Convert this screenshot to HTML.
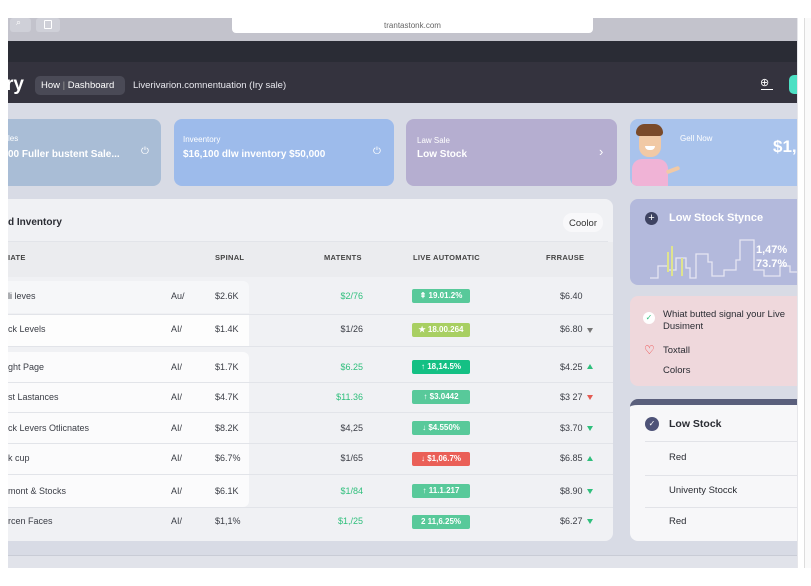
<!DOCTYPE html>
<html><head><meta charset="utf-8"><style>
*{margin:0;padding:0;box-sizing:border-box}
body{width:811px;height:586px;background:#fff;font-family:"Liberation Sans",sans-serif;position:relative;overflow:hidden}
.a{position:absolute}
.t{position:absolute;white-space:nowrap}
.card{position:absolute;border-radius:8px;color:#fff}
.row{position:absolute;left:8px;width:605px;height:1px;background:#e2e4e9}
.c{font-size:9px;color:#3a3d45}
.m{left:320px;width:43px;text-align:right}
.badge{position:absolute;left:412px;width:58px;height:14px;border-radius:2px;color:#fff;font-size:8px;font-weight:bold;text-align:center;line-height:14px}
.g{color:#2fbf7c}
.up{position:absolute;left:587px;width:0;height:0;border-left:3px solid transparent;border-right:3px solid transparent;border-bottom:5px solid #2fbf7c}
.dn{position:absolute;left:587px;width:0;height:0;border-left:3px solid transparent;border-right:3px solid transparent;border-top:5px solid #2fbf7c}
</style></head><body>
<div class="a" style="left:8px;top:18px;width:789px;height:23px;background:#c3c3cc"></div>
<div class="a" style="left:10px;top:18px;width:21px;height:14px;background:#cfd0d8;border-radius:3px"></div>
<div class="t" style="left:16px;top:17px;font-size:9px;color:#fff">⌕</div>
<div class="a" style="left:36px;top:18px;width:24px;height:14px;background:#cfd0d8;border-radius:3px"></div>
<div class="a" style="left:44px;top:20px;width:8px;height:9px;border:1px solid #fff;border-radius:1px"></div>
<div class="a" style="left:232px;top:18px;width:361px;height:15px;background:#fff;border-radius:0 0 4px 4px"></div>
<div class="t" style="left:232px;width:361px;top:21px;font-size:8px;color:#666;text-align:center">trantastonk.com</div>
<div class="a" style="left:8px;top:41px;width:789px;height:21px;background:#2a2c35"></div>
<div class="a" style="left:8px;top:62px;width:789px;height:41px;background:#34333e"></div>
<div class="t" style="left:6px;top:74px;font-size:19px;font-weight:bold;color:#fff">ry</div>
<div class="a" style="left:35px;top:76px;width:90px;height:19px;background:#4a4a56;border-radius:5px"></div>
<div class="t" style="left:41px;top:80px;font-size:9.5px;color:#fff">How <span style="color:#999">|</span> Dashboard</div>
<div class="t" style="left:133px;top:80px;font-size:9.5px;color:#e8e8ee">Liverivarion.comnentuation (Iry sale)</div>
<div class="t" style="left:760px;top:76px;font-size:11px;color:#fff">⊕</div>
<div class="a" style="left:761px;top:89px;width:12px;height:1px;background:#fff"></div>
<div class="a" style="left:789px;top:75px;width:8px;height:19px;background:#4de0c4;border-radius:5px 0 0 5px"></div>
<div class="a" style="left:8px;top:103px;width:789px;height:452px;background:#d8dbe5"></div>
<div class="a" style="left:8px;top:555px;width:789px;height:13px;background:#e1e3ea;border-top:1px solid #c9ccd6"></div>
<div class="a" style="left:797px;top:18px;width:1px;height:550px;background:#e6e6ea"></div>
<div class="a" style="left:804px;top:18px;width:7px;height:550px;background:#fafafa;border-left:1px solid #ddd"></div>
<div class="card" style="left:8px;top:119px;width:153px;height:67px;background:#a9bdd6;border-radius:0 8px 8px 0"></div>
<div class="t" style="left:8px;top:134px;font-size:8px;color:#fff">les</div>
<div class="t" style="left:8px;top:149px;font-size:10px;font-weight:bold;color:#fff">00 Fuller bustent Sale...</div>
<div class="t" style="left:141px;top:146px;font-size:10px;color:#fff">⏻</div>
<div class="card" style="left:174px;top:119px;width:220px;height:67px;background:#9dbbeb"></div>
<div class="t" style="left:183px;top:135px;font-size:8px;color:#fff">Inveentory</div>
<div class="t" style="left:183px;top:149px;font-size:10px;font-weight:bold;color:#fff">$16,100 dlw inventory $50,000</div>
<div class="t" style="left:373px;top:146px;font-size:10px;color:#fff">⏻</div>
<div class="card" style="left:406px;top:119px;width:211px;height:67px;background:#b5aed0"></div>
<div class="t" style="left:417px;top:136px;font-size:8px;color:#fff">Law Sale</div>
<div class="t" style="left:417px;top:149px;font-size:10px;font-weight:bold;color:#fff">Low Stock</div>
<div class="t" style="left:599px;top:144px;font-size:13px;color:#fff">›</div>
<div class="card" style="left:630px;top:119px;width:167px;height:67px;background:#a9c3ec;border-radius:8px 0 0 8px;overflow:hidden">
 <div class="a" style="left:2px;top:40px;width:36px;height:30px;background:#f0b3d6;border-radius:10px 10px 0 0"></div>
 <div class="a" style="left:9px;top:10px;width:22px;height:28px;background:#f1c9a5;border-radius:10px"></div>
 <div class="a" style="left:6px;top:5px;width:27px;height:12px;background:#7a4a2a;border-radius:10px 10px 4px 4px"></div>
 <div class="a" style="left:15px;top:27px;width:10px;height:4px;background:#fff;border-radius:0 0 5px 5px"></div>
 <div class="a" style="left:36px;top:49px;width:14px;height:4px;background:#f1c9a5;border-radius:2px;transform:rotate(-20deg)"></div>
</div>
<div class="t" style="left:680px;top:134px;font-size:8px;color:#fff">Gell Now</div>
<div class="t" style="left:773px;top:137px;font-size:17px;font-weight:bold;color:#fff">$1,</div>
<div class="a" style="left:8px;top:199px;width:605px;height:342px;background:#f0f1f4;border-radius:0 8px 8px 0"></div>
<div class="t" style="left:8px;top:217px;font-size:10px;font-weight:bold;color:#2a2c33">d Inventory</div>
<div class="a" style="left:563px;top:213px;width:40px;height:19px;background:#f8f8fa;border-radius:9px"></div>
<div class="t" style="left:569px;top:218px;font-size:9.5px;color:#333">Coolor</div>
<div class="row" style="top:241px;width:600px"></div>
<div class="a" style="left:8px;top:242px;width:605px;height:35px;background:#ebecef"></div>
<div class="t" style="left:8px;top:253px;font-size:7.5px;font-weight:bold;color:#444;letter-spacing:.3px">IATE</div>
<div class="t" style="left:215px;top:253px;font-size:7.5px;font-weight:bold;color:#444;letter-spacing:.3px">SPINAL</div>
<div class="t" style="left:324px;top:253px;font-size:7.5px;font-weight:bold;color:#444;letter-spacing:.3px">MATENTS</div>
<div class="t" style="left:413px;top:253px;font-size:7.5px;font-weight:bold;color:#444;letter-spacing:.3px">LIVE AUTOMATIC</div>
<div class="t" style="left:546px;top:253px;font-size:7.5px;font-weight:bold;color:#444;letter-spacing:.3px">FRRAUSE</div>
<div class="a" style="left:8px;top:281px;width:241px;height:32px;background:#f6f7f9;border-radius:0 6px 0 0"></div>
<div class="a" style="left:8px;top:315px;width:241px;height:31px;background:#fdfdfd"></div>
<div class="a" style="left:8px;top:352px;width:241px;height:155px;background:#fbfbfc;border-radius:0 6px 6px 0"></div>
<div class="row" style="top:314px"></div><div class="row" style="top:346px"></div><div class="row" style="top:382px"></div>
<div class="row" style="top:412px"></div><div class="row" style="top:443px"></div><div class="row" style="top:474px"></div><div class="row" style="top:507px"></div>

<div class="t c" style="left:8px;top:291px">li leves</div><div class="t c" style="left:171px;top:291px">Au/</div><div class="t c" style="left:215px;top:291px">$2.6K</div><div class="t c g m" style="top:291px">$2/76</div><div class="badge" style="top:289px;background:#58c99a">⇞ 19.01.2%</div><div class="t c" style="left:560px;top:291px">$6.40</div>
<div class="t c" style="left:8px;top:324px">ck Levels</div><div class="t c" style="left:171px;top:324px">AI/</div><div class="t c" style="left:215px;top:324px">$1.4K</div><div class="t c m" style="top:324px">$1/26</div><div class="badge" style="top:323px;background:#a8cf62">★ 18.00.264</div><div class="t c" style="left:560px;top:324px">$6.80</div><div class="dn" style="top:328px;border-top-color:#777"></div>
<div class="t c" style="left:8px;top:362px">ght Page</div><div class="t c" style="left:171px;top:362px">AI/</div><div class="t c" style="left:215px;top:362px">$1.7K</div><div class="t c g m" style="top:362px">$6.25</div><div class="badge" style="top:360px;background:#14c084">↑ 18,14.5%</div><div class="t c" style="left:560px;top:362px">$4.25</div><div class="up" style="top:364px"></div>
<div class="t c" style="left:8px;top:392px">st Lastances</div><div class="t c" style="left:171px;top:392px">AI/</div><div class="t c" style="left:215px;top:392px">$4.7K</div><div class="t c g m" style="top:392px">$11.36</div><div class="badge" style="top:390px;background:#58c99a">↑ $3.0442</div><div class="t c" style="left:560px;top:392px">$3 27</div><div class="dn" style="top:395px;border-top-color:#e45b52"></div>
<div class="t c" style="left:8px;top:423px">ck Levers Otlicnates</div><div class="t c" style="left:171px;top:423px">AI/</div><div class="t c" style="left:215px;top:423px">$8.2K</div><div class="t c m" style="top:423px">$4,25</div><div class="badge" style="top:421px;background:#58c99a">↓ $4.550%</div><div class="t c" style="left:560px;top:423px">$3.70</div><div class="dn" style="top:426px"></div>
<div class="t c" style="left:8px;top:453px">k cup</div><div class="t c" style="left:171px;top:453px">AI/</div><div class="t c" style="left:215px;top:453px">$6.7%</div><div class="t c m" style="top:453px">$1/65</div><div class="badge" style="top:452px;background:#ea5f57">↓ $1,06.7%</div><div class="t c" style="left:560px;top:453px">$6.85</div><div class="up" style="top:456px"></div>
<div class="t c" style="left:8px;top:486px">mont &amp; Stocks</div><div class="t c" style="left:171px;top:486px">AI/</div><div class="t c" style="left:215px;top:486px">$6.1K</div><div class="t c g m" style="top:486px">$1/84</div><div class="badge" style="top:484px;background:#58c99a">↑ 11.1.217</div><div class="t c" style="left:560px;top:486px">$8.90</div><div class="dn" style="top:489px"></div>
<div class="t c" style="left:8px;top:516px">rcen Faces</div><div class="t c" style="left:171px;top:516px">AI/</div><div class="t c" style="left:215px;top:516px">$1,1%</div><div class="t c g m" style="top:516px">$1,/25</div><div class="badge" style="top:515px;background:#58c99a">2 11,6.25%</div><div class="t c" style="left:560px;top:516px">$6.27</div><div class="dn" style="top:519px"></div>
<div class="a" style="left:630px;top:199px;width:167px;height:86px;background:#b3b9dc;border-radius:8px 0 0 8px"></div>
<div class="a" style="left:645px;top:212px;width:13px;height:13px;background:#3e4362;border-radius:50%;color:#fff;font-size:11px;line-height:12px;text-align:center">+</div>
<div class="t" style="left:669px;top:212px;font-size:11px;font-weight:bold;color:#fff">Low Stock Stynce</div>
<svg class="a" style="left:650px;top:236px" width="147" height="48"><polyline fill="none" stroke="#e6e6f2" stroke-width="1.3" points="0,42 8,42 8,30 18,30 18,34 26,34 26,22 36,22 36,32 40,32 40,42 46,42 46,18 58,18 58,26 62,26 62,40 74,40 74,34 86,34 86,24 90,24 90,4 104,4 104,34 114,34 114,40 130,40 130,30 140,30 140,36 147,36"/><line x1="22" y1="10" x2="22" y2="40" stroke="#dfe38e" stroke-width="2"/><line x1="18" y1="16" x2="18" y2="36" stroke="#dfe38e" stroke-width="2"/><line x1="32" y1="22" x2="32" y2="40" stroke="#dfe38e" stroke-width="2"/></svg>
<div class="t" style="left:756px;top:243px;font-size:11px;font-weight:bold;color:#fff;line-height:14px">1,47%<br>73.7%</div>
<div class="a" style="left:630px;top:296px;width:167px;height:90px;background:#efd8dc;border-radius:8px 0 0 8px"></div>
<div class="a" style="left:643px;top:312px;width:12px;height:12px;background:#fff;border-radius:50%;color:#2fbf7c;font-size:8px;text-align:center;line-height:12px">✓</div>
<div class="t" style="left:663px;top:309px;font-size:9.5px;color:#2a2c33;line-height:12px">Whiat butted signal your Live<br>Dusiment</div>
<div class="t" style="left:644px;top:343px;font-size:12px;color:#e33">♡</div>
<div class="t" style="left:663px;top:345px;font-size:9.5px;color:#2a2c33">Toxtall</div>
<div class="t" style="left:663px;top:365px;font-size:9.5px;color:#2a2c33">Colors</div>
<div class="a" style="left:630px;top:399px;width:167px;height:142px;background:#f7f7f9;border-radius:8px 0 0 8px;border-top:6px solid #5a5f7c"></div>
<div class="a" style="left:645px;top:417px;width:14px;height:14px;background:#4e5378;border-radius:50%;color:#fff;font-size:8px;text-align:center;line-height:14px">✓</div>
<div class="t" style="left:669px;top:418px;font-size:10.5px;font-weight:bold;color:#2a2c33">Low Stock</div>
<div class="a" style="left:645px;top:441px;width:152px;height:1px;background:#e2e3e8"></div>
<div class="t" style="left:669px;top:452px;font-size:9.5px;color:#2a2c33">Red</div>
<div class="a" style="left:645px;top:475px;width:152px;height:1px;background:#e2e3e8"></div>
<div class="t" style="left:669px;top:485px;font-size:9.5px;color:#2a2c33">Univenty Stocck</div>
<div class="a" style="left:645px;top:507px;width:152px;height:1px;background:#e2e3e8"></div>
<div class="t" style="left:669px;top:516px;font-size:9.5px;color:#2a2c33">Red</div>
</body></html>
